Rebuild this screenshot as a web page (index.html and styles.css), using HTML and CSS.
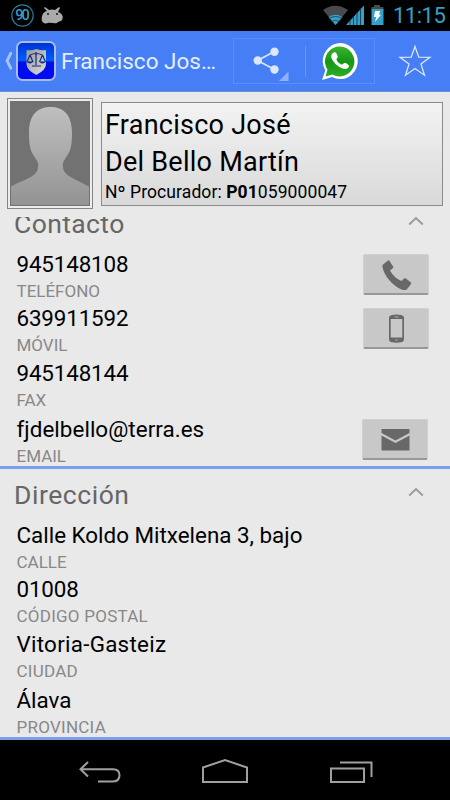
FILE: index.html
```html
<!DOCTYPE html>
<html lang="es">
<head>
<meta charset="utf-8">
<title>Francisco José Del Bello Martín</title>
<link rel="stylesheet" href="styles.css">
</head>
<body>
<header class="status">
  <svg class="status-left" width="70" height="31" viewBox="0 0 70 31">
    <circle cx="22.5" cy="15.5" r="10.700" fill="none" stroke="#287b9b" stroke-width="1.2"/>
    <text x="22.5" y="20.3" text-anchor="middle" textLength="14.500" class="badge-num">90</text>
    <path d="M42 21c-1-5 1-9 5-10l-3-3 1-1 4 3q3-1 6 0l4-3 1 1-2 4c4 1 6 5 4 8-1 2-4 1-5 3-3 1-6-1-9 0-3 1-5 0-6-2z" fill="#aaa"/>
    <circle cx="48" cy="14" r="1" fill="#111"/><circle cx="57" cy="14" r="1" fill="#111"/>
  </svg>
  <svg class="status-right" width="70" height="31" viewBox="320 0 70 31">
    <path d="M323 10q12-8.500 25 0L335.500 25z" fill="#4a4a4a"/>
    <path d="M328.500 17q7-4.500 14 0L335.500 25z" fill="#36a0c8"/>
    <path d="M329 18.500q6.500-4 13 0M331.500 21.500q4-2.500 8 0" fill="none" stroke="#123c4c" stroke-width=".8"/>
    <path d="M346 25L364 5.500V25z" fill="#36a0c8"/>
    <path d="M350 19v6M353.500 16v9M357 12v13M360.500 8v17" stroke="#102d38" stroke-width=".8"/>
    <path d="M374 5h6v2h3.500v3h-12V7h2.500z" fill="#4a4a4a"/>
    <path d="M371.500 9h12v16h-12z" fill="#36a0c8"/>
    <path d="M375 11h5l-1 3.500 2 .3-6 7.200 1.300-5H374z" fill="#fff"/>
  </svg>
  <span class="clock">11:15</span>
</header>
<nav class="bar">
  <svg class="back" width="12" height="20" viewBox="0 0 12 20"><path d="M9.800 1L5.500 9.800 9.800 18.500H13L8.700 9.800 13 1z" fill="#a8c4ff"/></svg>
  <svg class="logo" width="40" height="40" viewBox="0 0 40 40">
    <defs>
      <linearGradient id="lg" x2="0" y2="1"><stop offset="0" stop-color="#0030d0"/><stop offset=".48" stop-color="#005cff"/><stop offset=".54" stop-color="#0010e0"/><stop offset="1" stop-color="#0008ff"/></linearGradient>
      <linearGradient id="sh" x2="1" y2="1"><stop offset="0" stop-color="#999"/><stop offset="1" stop-color="#ddd"/></linearGradient>
    </defs>
    <rect x="1" y="1" width="38" height="38" rx="5.500" fill="url(#lg)" stroke="#a9bcec" stroke-width="2"/>
    <path d="M10.500 9q5 1 10-1 5 2 9.500 1v14q0 6-9.700 11-9.800-5-9.800-11z" fill="url(#sh)"/>
    <path d="M20 11v13M14 14q6-3 12.500 0M14 14l-3 7M14 14l3 7M26.500 14l-3 7M26.500 14l3 7M16 25h9" stroke="#102b80" stroke-width="1.200" fill="none"/>
    <path d="M10.500 20.500h7q-3.500 4-7 0zM23 20.500h7q-3.500 4-7 0z" fill="#102b80"/>
  </svg>
  <h1 class="title">Francisco Jos…</h1>
  <div class="share">
    <svg width="71" height="45" viewBox="234 39 71 45">
      <path d="M274.500 51.500L257.500 60.500 274.500 69.500" fill="none" stroke="#dbe6ff" stroke-width="1.700"/>
      <circle cx="274.500" cy="51.700" r="4.200" fill="#dbe6ff"/><circle cx="257.700" cy="60.500" r="4.200" fill="#dbe6ff"/><circle cx="274.500" cy="69.500" r="4.200" fill="#dbe6ff"/>
      <path d="M279 81l9.500-9.500V81z" fill="#8eb1ff"/>
    </svg>
    <span class="rule"></span>
    <svg width="68" height="45" viewBox="307 39 68 45">
      <defs><linearGradient id="wa" x2="0" y2="1"><stop offset="0" stop-color="#3bb52f"/><stop offset=".5" stop-color="#159714"/><stop offset="1" stop-color="#2dad25"/></linearGradient></defs>
      <path d="M323 80l3.300-9.500A17.500 18 0 1 1 333 77z" fill="#fff"/>
      <path d="M326.500 76.500l2-6.700A14.700 15 0 1 1 333.500 74.500z" fill="url(#wa)"/>
      <path d="M334.500 52.500q2-1 3 1l1.300 3q.3 1.300-1.500 2.800 1.500 4 5.700 5.500l2.200-1.700q1-.5 2 .2l2.500 2q1 1.500-1 3-3 2-8-1-5-3-7.500-7.500-2.500-5 1.300-7.300z" fill="#fff"/>
    </svg>
  </div>
  <svg class="star" width="34" height="34" viewBox="398 45 34 34"><path d="M415 47.500l3.800 10.600 11.200.2-9 6.800 3.500 11.100-9.500-6.700-9.500 6.700 3.500-11.100-9-6.800 11.200-.2z" fill="none" stroke="#dbe6ff" stroke-width="1.300"/></svg>
</nav>
<main class="page">
  <section class="profile">
    <div class="photo">
      <svg width="78" height="103" viewBox="0 0 78 103">
        <defs><linearGradient id="man" x2="0" y2="1"><stop offset="0" stop-color="#bfbfbf"/><stop offset="1" stop-color="#939393"/></linearGradient></defs>
        <path d="M0 103V84.500C13 77 27 75 27 65q1-4-2-8c-4-6-7-9-7-26C18 12 27 5 39.500 5S61 12 61 31c0 17-3 20-7 26q-3 4-2 8c0 9 13 12 26 19.500V103z" fill="url(#man)"/>
      </svg>
    </div>
    <div class="namecard">
      <p class="name">Francisco José</p>
      <p class="name">Del Bello Martín</p>
      <p class="num">Nº Procurador: <b>P01</b>059000047</p>
    </div>
  </section>
  <div class="scroller">
    <section class="group first">
      <h2 class="head"><span>Contacto</span><svg width="16" height="10" viewBox="0 0 16 10"><path d="M1.200 8.500L8 2l6.800 6.500" fill="none" stroke="#9a9a9a" stroke-width="1.800"/></svg></h2>
      <div class="row r1"><div><p class="value digits">945148108</p><p class="label">TELÉFONO</p></div>
        <span class="btn"><svg width="65" height="38" viewBox="0 0 65 38"><path d="M18.500 10l5.500-4.500q1-.5 1.500.5l4 6-1 1.500-2.500 2q4.500 8 11.500 10.500l2.500-2.500q1-.7 2 0l5 4q.5 1-.3 2l-4 5q-2 1-5 0C29 31 20 21 18.500 12z" fill="#686868"/></svg></span></div>
      <div class="row r2"><div><p class="value digits">639911592</p><p class="label">MÓVIL</p></div>
        <span class="btn"><svg width="65" height="38" viewBox="0 0 65 38"><path fill-rule="evenodd" d="M28 6q4.500-1 9 0 3 .5 3 3v21q0 3-3 3.300-4.500.7-9 0-3-.3-3-3.300V9q0-2.500 3-3zM26.700 10v18.500h11.600V10z" fill="#686868"/><path d="M30.500 8h4M31 31h3" stroke="#aaa"/></svg></span></div>
      <div class="row r3"><div><p class="value digits">945148144</p><p class="label">FAX</p></div></div>
      <div class="row r4"><div><p class="value mail">fjdelbello@terra.es</p><p class="label">EMAIL</p></div>
        <span class="btn btn-mail"><svg width="65" height="38" viewBox="0 0 65 38"><path d="M18.500 9h28v4l-14 7.500-14-7.500zM18.500 15.500l14 7.500 14-7.500V30.500h-28z" fill="#686868"/></svg></span></div>
    </section>
    <section class="group">
      <h2 class="head address"><span>Dirección</span><svg width="16" height="10" viewBox="0 0 16 10"><path d="M1.200 8.500L8 2l6.800 6.500" fill="none" stroke="#9a9a9a" stroke-width="1.800"/></svg></h2>
      <div class="row r1"><div><p class="value">Calle Koldo Mitxelena 3, bajo</p><p class="label">CALLE</p></div></div>
      <div class="row r2"><div><p class="value digits">01008</p><p class="label wide">CÓDIGO POSTAL</p></div></div>
      <div class="row r3"><div><p class="value city">Vitoria-Gasteiz</p><p class="label wide">CIUDAD</p></div></div>
      <div class="row r4"><div><p class="value">Álava</p><p class="label wide">PROVINCIA</p></div></div>
    </section>
  </div>
</main>
<footer class="keys">
  <svg width="450" height="60" viewBox="0 740 450 60" fill="none" stroke="#a0a0a0" stroke-width="2">
    <path d="M88 762l-7.500 7.300L88 776.500M81 769.300h32q6.500 0 6.500 6t-6.500 6.200H98"/>
    <path d="M203 767.500l22-7.500 22 7.500V782h-44z"/>
    <path d="M331 768.500h33V782h-33zM340 762.500h31.500V777"/>
  </svg>
</footer>
</body>
</html>
```

FILE: styles.css
```css
* { box-sizing: border-box; margin: 0; padding: 0; }
body { width: 450px; height: 800px; overflow: hidden; background: #e9e9e9; font-family: Roboto, "Liberation Sans", sans-serif; color: #000; }
svg { display: block; flex: none; }
p, h1, h2 { white-space: nowrap; font-weight: 400; }
.status { display: flex; height: 31px; background: #000; }
.status-right { margin-left: 250px; }
.badge-num { font-size: 14.5px; font-weight: 500; fill: #3b9dbf; }
.clock { margin-left: 3px; font-size: 22px; line-height: 32px; color: #36a0c8; letter-spacing: -.5px; }
.bar { display: flex; align-items: center; height: 61px; background: #457ef5; border-bottom: 1px solid #6f8fca; }
.back { margin-right: 4px; }
.title { width: 174px; flex: none; padding-left: 5px; font-size: 22.5px; color: #e5edff; line-height: 60px; }
.share { display: flex; align-items: center; width: 142px; height: 46px; margin-left: 3px; border: 1px solid #5b8ef8; flex: none; }
.rule { width: 1px; height: 31px; background: #6a98fa; }
.star { margin-left: 22.5px; }
.page { height: 648px; overflow: hidden; }
.profile { display: flex; align-items: flex-start; gap: 8px; height: 125px; padding: 6px 7px 0; }
.photo { width: 86px; height: 111px; padding: 2px; border: 1px solid #858585; background: #ececec; }
.photo svg { width: 80px; height: 105px; border: 1px solid #727272; background: #727272; }
.namecard { width: 342px; height: 104px; margin-top: 4px; padding: 4px 3px 0; border: 1px solid #8b8b8b; background: linear-gradient(#f3f3f3, #d9d9d9); }
.name { font-size: 27px; line-height: 37px; letter-spacing: .25px; }
.num { font-size: 17.5px; line-height: 22px; letter-spacing: .09px; }
.scroller { height: 523px; overflow: hidden; }
.group { height: 271px; border-bottom: 3px solid #7b9fea; overflow: hidden; }
.first { margin-top: -19px; }
.head { display: flex; justify-content: space-between; align-items: flex-start; height: 53px; padding: 0 26px 0 14px; font-size: 26.5px; line-height: 51px; letter-spacing: .4px; color: #666; }
.address { letter-spacing: .55px; }
.head svg { margin-top: 18px; }
.row { display: flex; justify-content: space-between; align-items: flex-start; padding: 0 21px 0 16.5px; }
.r1 { height: 54px; }
.r2 { height: 55px; }
.r3 { height: 56px; }
.r4 { height: 50px; }
.value { height: 28px; font-size: 22.4px; line-height: 26px; }
.digits { letter-spacing: -.15px; }
.mail { letter-spacing: .05px; }
.city { letter-spacing: .27px; }
.label { font-size: 17px; line-height: 25px; color: #888; }
.wide { letter-spacing: .25px; }
.btn { width: 66px; height: 41px; margin-top: 3px; border: 1px solid #d0d0d0; border-bottom: 2px solid #999; border-radius: 2px; background: #c8c8c8; }
.btn-mail { margin-right: 1px; }
.keys { height: 60px; background: #000; }
```
